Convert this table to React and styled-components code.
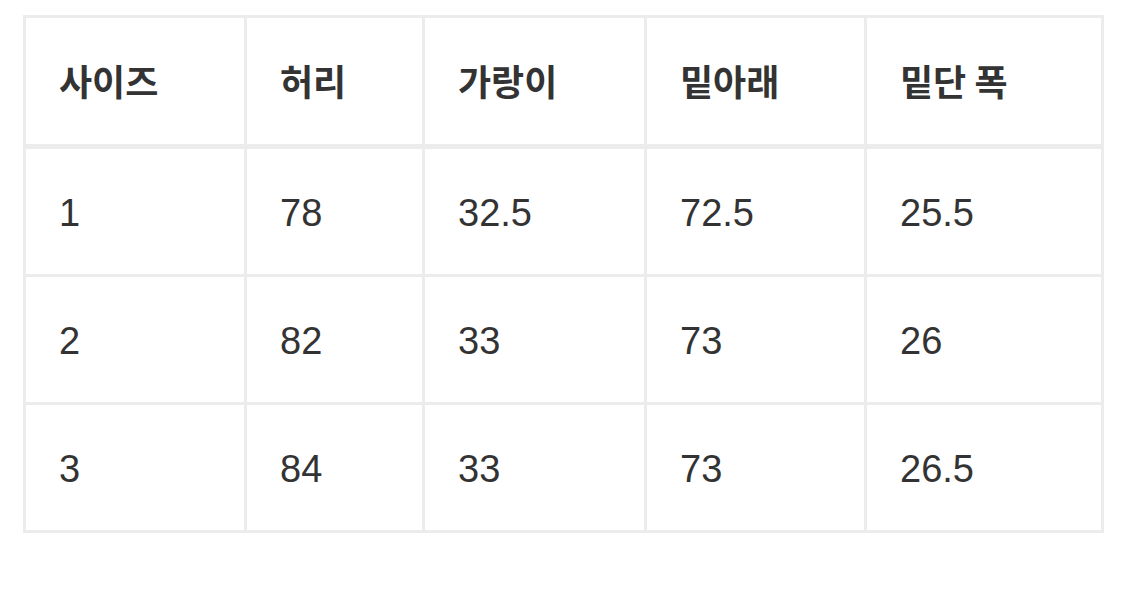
import React from "react";
import styled, { createGlobalStyle } from "styled-components";

const Global = createGlobalStyle`
  html, body { margin: 0; padding: 0; background: #fff; }
  body { font-family: "Liberation Sans", "Noto Sans CJK KR", sans-serif; }
`;

const Page = styled.div`
  padding: 15px 24px 15px 23px;
`;

const Table = styled.table`
  width: 100%;
  border-collapse: collapse;
  table-layout: fixed;
  color: #333;
  border: 2px solid #ececec;
`;

const HeadCell = styled.th`
  height: 124px;
  padding: 0 0 2px 33px;
  text-align: left;
  font-family: "Noto Sans CJK KR", "Liberation Sans", sans-serif;
  font-weight: 700;
  font-size: 36px;
  border: 3px solid #ececec;
  border-bottom-width: 5px;
  vertical-align: middle;
`;

const Cell = styled.td`
  height: 121px;
  padding: 4px 0 0 33px;
  font-size: 38px;
  font-weight: 400;
  border: 3px solid #ececec;
  vertical-align: middle;
`;

const widths = [221, 178, 222, 220, 237];
const headers = ["사이즈", "허리", "가랑이", "밑아래", "밑단 폭"];
const rows = [
  ["1", "78", "32.5", "72.5", "25.5"],
  ["2", "82", "33", "73", "26"],
  ["3", "84", "33", "73", "26.5"],
];

export default function App() {
  return (
    <Page>
      <Global />
      <Table>
        <colgroup>
          {widths.map((w, i) => (
            <col key={i} style={{ width: w }} />
          ))}
        </colgroup>
        <thead>
          <tr>
            {headers.map((h) => (
              <HeadCell key={h}>{h}</HeadCell>
            ))}
          </tr>
        </thead>
        <tbody>
          {rows.map((r, i) => (
            <tr key={i}>
              {r.map((c, j) => (
                <Cell key={j}>{c}</Cell>
              ))}
            </tr>
          ))}
        </tbody>
      </Table>
    </Page>
  );
}
